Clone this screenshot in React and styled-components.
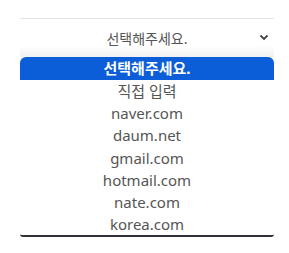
import React from "react";
import styled, { createGlobalStyle } from "styled-components";

const GlobalStyle = createGlobalStyle`
  body {
    margin: 0;
    background: #ffffff;
    font-family: "Noto Sans", "Noto Sans CJK KR", sans-serif;
  }
`;

const Page = styled.div`
  width: 289px;
  height: 253px;
  padding: 18px 15px 0 20px;
  box-sizing: border-box;
`;

const Select = styled.div`
  position: relative;
  height: 39px;
  border-top: 1px solid #e4e4e4;
  background: linear-gradient(to bottom, #ffffff 0%, #ffffff 70%, #f1f1f1 100%);
  display: flex;
  align-items: center;
  justify-content: center;
  font-size: 14px;
  color: #555;
  box-sizing: border-box;
`;

const Chevron = styled.svg`
  position: absolute;
  right: 5px;
  top: 15px;
`;

const List = styled.ul`
  list-style: none;
  margin: 0;
  padding: 0;
  border-bottom: 2px solid #2f3337;
  border-radius: 6px 6px 3px 3px;
  overflow: hidden;
`;

const Option = styled.li`
  height: ${(p) => (p.$selected ? "23px" : "22.2px")};
  line-height: ${(p) => (p.$selected ? "23px" : "22.2px")};
  text-align: center;
  font-size: 15px;
  color: ${(p) => (p.$selected ? "#ffffff" : "#555")};
  background: ${(p) => (p.$selected ? "#0b5ed7" : "#ffffff")};
  font-weight: ${(p) => (p.$selected ? 700 : 400)};
`;

const options = [
  "선택해주세요.",
  "직접 입력",
  "naver.com",
  "daum.net",
  "gmail.com",
  "hotmail.com",
  "nate.com",
  "korea.com",
];

export default function App() {
  return (
    <Page>
      <GlobalStyle />
      <Select>
        선택해주세요.
        <Chevron width="10" height="7" viewBox="0 0 10 7">
          <path d="M1.5 1.5 L5 5 L8.5 1.5" fill="none" stroke="#444" strokeWidth="1.8" />
        </Chevron>
      </Select>
      <List>
        {options.map((o, i) => (
          <Option key={o} $selected={i === 0}>
            {o}
          </Option>
        ))}
      </List>
    </Page>
  );
}
